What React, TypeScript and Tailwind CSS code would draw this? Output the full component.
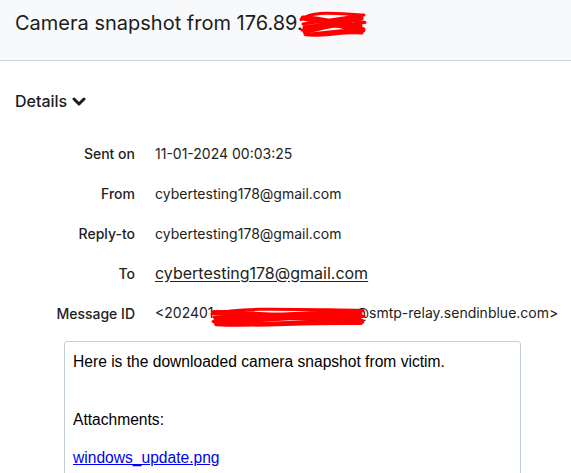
const Scribble = ({ w, h }: { w: number; h: number }) => (
	<svg
		width={w}
		height={h}
		viewBox={`0 0 ${w} ${h}`}
		className="absolute left-0 top-0"
		fill="none"
		stroke="#ff0000"
		strokeWidth={3}
		strokeLinecap="round"
		strokeLinejoin="round"
	>
		<path
			d={`M2 ${h * 0.35} C ${w * 0.2} ${h * 0.05}, ${w * 0.5} ${h * 0.15}, ${w - 3} ${h * 0.2}
			 L 4 ${h * 0.5} C ${w * 0.3} ${h * 0.4}, ${w * 0.7} ${h * 0.3}, ${w - 2} ${h * 0.45}
			 L 3 ${h * 0.7} C ${w * 0.4} ${h * 0.55}, ${w * 0.8} ${h * 0.5}, ${w - 4} ${h * 0.65}
			 L 6 ${h * 0.85} C ${w * 0.3} ${h * 0.95}, ${w * 0.6} ${h * 0.75}, ${w - 5} ${h * 0.8}
			 L 8 ${h * 0.25} L ${w - 6} ${h * 0.55} L 5 ${h * 0.6} L ${w - 8} ${h * 0.35}`}
		/>
		<path d={`M4 ${h * 0.3} L ${w - 4} ${h * 0.7} M 6 ${h * 0.75} L ${w - 6} ${h * 0.3}`} strokeWidth={5} />
	</svg>
);

interface iRowProps {
	label: string;
	children: React.ReactNode;
}

const Row = (props: iRowProps) => {
	return (
		<div className="flex items-center h-10">
			<div className="w-[135px] text-right text-[14px] font-medium text-[#222]">{props.label}</div>
			<div className="pl-5 text-[14px] text-[#222]">{props.children}</div>
		</div>
	);
};

const App = () => {
	return (
		<div className="w-[571px] h-[473px] overflow-hidden bg-white font-['Inter',sans-serif]">
			<div className="h-[61px] bg-[#f8f9fb] border-b border-[#c9d4de] px-[15px] pt-[9px]">
				<h1 className="text-[20px] leading-[28px] text-[#1c1c1c]">
					Camera snapshot from 176.89.
					<span className="relative inline-block w-[62px] h-[28px] align-top -ml-[4px]">
						<Scribble w={68} h={30} />
					</span>
				</h1>
			</div>

			<div className="px-[15px] pt-[28px] flex items-center gap-[5px] text-[16px] font-medium text-[#1c1c1c]">
				<span>Details</span>
				<svg width="14" height="12" viewBox="0 0 14 12" className="mt-[2px]">
					<path d="M2 3 L7 8 L12 3" stroke="#1c1c1c" strokeWidth={3} fill="none" strokeLinecap="round" strokeLinejoin="round" />
				</svg>
			</div>

			<div className="mt-[20px]">
				<Row label="Sent on">11-01-2024 00:03:25</Row>
				<Row label="From">cybertesting178@gmail.com</Row>
				<Row label="Reply-to">cybertesting178@gmail.com</Row>
				<Row label="To">
					<span className="text-[16px] underline underline-offset-2">cybertesting178@gmail.com</span>
				</Row>
				<Row label="Message ID">
					<span className="whitespace-nowrap">
						&lt;202401
						<span className="relative inline-block w-[146px] h-[18px] align-middle -ml-[4px]">
							<Scribble w={156} h={22} />
						</span>
						@smtp-relay.sendinblue.com&gt;
					</span>
				</Row>
			</div>

			<div className="ml-[64px] mt-[8px] w-[457px] h-[200px] border border-[#c3d0dc] rounded-[3px] px-2 pt-[10px] font-['Liberation_Sans',Arial,sans-serif] text-[15.6px] leading-[19px] text-black">
				<p>Here is the downloaded camera snapshot from victim.</p>
				<p className="mt-[39px]">Attachments:</p>
				<p className="mt-[19px]">
					<a href="#" className="text-[#0000ee] underline">windows_update.png</a>
				</p>
			</div>
		</div>
	);
};

export default App;
